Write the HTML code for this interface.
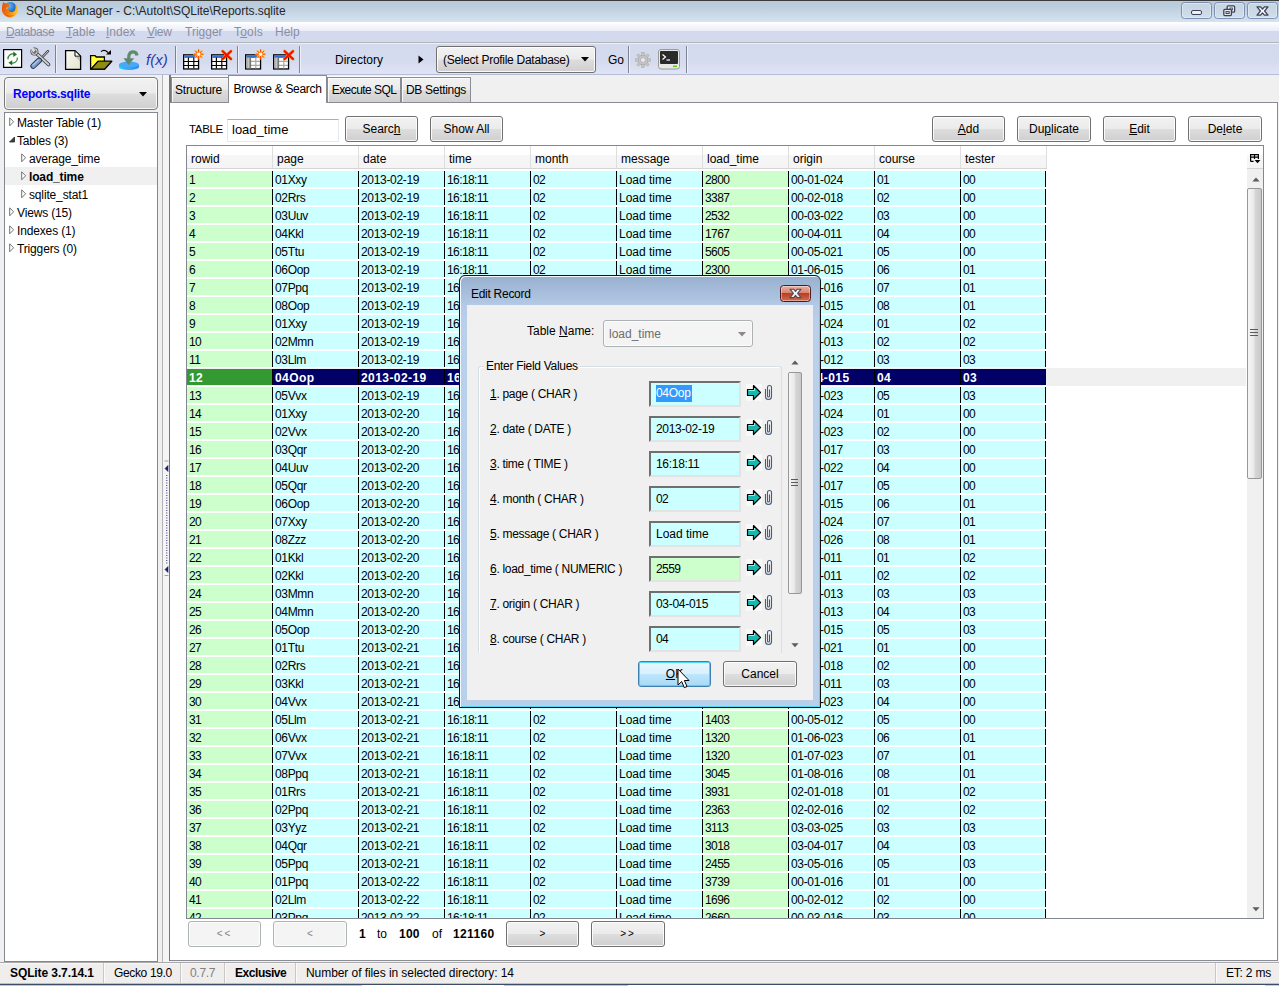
<!DOCTYPE html><html><head><meta charset="utf-8"><title>SQLite Manager</title><style>
*{box-sizing:border-box;margin:0;padding:0}
html,body{width:1279px;height:986px;overflow:hidden;background:#f0f0f0}
body{position:relative;font:12px "Liberation Sans",sans-serif;color:#000}
.a{position:absolute;white-space:pre}
.t{position:absolute;white-space:pre;line-height:14px;height:14px}
u{text-decoration:underline;text-underline-offset:1px}
.btn{position:absolute;border:1px solid #707070;border-radius:3px;background:linear-gradient(#f2f2f2 0,#ebebeb 48%,#dddddd 52%,#cfcfcf 100%);box-shadow:inset 0 0 0 1px rgba(255,255,255,.85);text-align:center;white-space:pre}
.btn.dis{border-color:#adb2b5;background:#f4f4f4;color:#838383}
.sep{position:absolute;width:1px;background:#7e8296;box-shadow:1px 0 0 #eef1fa}
.tab{position:absolute;border:1px solid #898c95;border-bottom:none;background:linear-gradient(#f2f2f2 0,#ebebeb 48%,#dddddd 52%,#cfcfcf 100%);box-shadow:inset 1px 1px 0 rgba(255,255,255,.8),0 -1px 0 #fbfbfb;text-align:center;white-space:pre}
.c{position:absolute;height:16px;line-height:18px;white-space:pre;overflow:hidden;padding-left:2px;letter-spacing:-.33px}
.cy{background:#ccffff;border-left:1px solid #000;padding-left:2px}
.gr{background:#ccffcc}
.g1{background:#ccffcc}
.sel .cy{background:#000066;color:#fff;font-weight:bold;border-left-color:#000;letter-spacing:.42px}
.sel .g1{background:#339933;color:#fff;font-weight:bold;letter-spacing:.3px}
.hd{position:absolute;top:146px;height:22px;line-height:27px;padding-left:4px;border-right:1px solid #dedede;background:linear-gradient(#fff 0,#fff 40%,#f6f6f6 41%,#f4f4f4 100%);white-space:pre}
.tb{position:absolute;height:26px;border:2px solid;border-color:#6f6f6f #e3e3e3 #e3e3e3 #6f6f6f;background:#ccffff;line-height:23px;padding-left:5px;white-space:pre;letter-spacing:-.3px}
.fl{position:absolute;left:490px;line-height:14px;white-space:pre}
.stsep{position:absolute;top:963px;width:1px;height:20px;background:#c9c6c6;box-shadow:1px 0 0 #fbfafa}
</style></head><body>
<div class="a" style="left:0;top:0;width:1279px;height:22px;background:linear-gradient(#b8cadb 0,#bccddd 30%,#d6e4f1 100%)"></div>
<div class="a" style="left:0;top:0;width:1279px;height:1px;background:#3a3a3a"></div>
<svg class="a" style="left:0px;top:0px" width="20" height="20" viewBox="0 0 20 20"><defs><radialGradient id="gl" cx=".4" cy=".3" r=".8"><stop offset="0" stop-color="#5cc0f8"/><stop offset=".5" stop-color="#2a78d0"/><stop offset="1" stop-color="#16307e"/></radialGradient><linearGradient id="fx" x1="0" y1="0" x2="1" y2=".3"><stop offset="0" stop-color="#e4500a"/><stop offset=".55" stop-color="#f07a10"/><stop offset="1" stop-color="#ffc020"/></linearGradient></defs><circle cx="10.4" cy="8.6" r="6.6" fill="url(#gl)"/><path d="M3.2 2 C4 3.2 5 3.6 6.4 3.2 C7 4.2 8 4.4 9.2 4 C8.6 5.2 9 6.2 10.2 6.6 C8.8 6.8 7.8 7.4 7.6 8.4 C8.8 8.8 9.4 9.8 8.8 10.8 C10.2 12.8 13.6 12.4 15 10 C16 8 15.6 5.6 14.6 3.6 C17.6 5.4 18.8 9 17.6 12.4 C16.2 16 12 18.2 8 17.2 C3.6 16 1.4 12 2 7.6 C2.2 5.6 2.6 3.6 3.2 2Z" fill="url(#fx)"/><path d="M5 13.5 C7 16 12 16.6 15 14 C12.6 17.4 7 17.8 5 13.5Z" fill="#c8400a" opacity=".55"/><path d="M5.6 8.2 L8 7.4 L7.4 8.6Z" fill="#fff3c0"/></svg>
<div class="t" style="left:26px;top:4px;color:#262626;letter-spacing:-.04px">SQLite Manager - C:\AutoIt\SQLite\Reports.sqlite</div>
<div class="a" style="left:1181px;top:2px;width:31px;height:17px;border:1px solid #7d90b2;border-radius:3.5px;background:linear-gradient(rgba(255,255,255,.22),rgba(255,255,255,.04));box-shadow:inset 0 0 0 1px rgba(255,255,255,.35)"></div>
<div class="a" style="left:1214px;top:2px;width:31px;height:17px;border:1px solid #7d90b2;border-radius:3.5px;background:linear-gradient(rgba(255,255,255,.22),rgba(255,255,255,.04));box-shadow:inset 0 0 0 1px rgba(255,255,255,.35)"></div>
<div class="a" style="left:1247px;top:2px;width:31px;height:17px;border:1px solid #7d90b2;border-radius:3.5px;background:linear-gradient(rgba(255,255,255,.22),rgba(255,255,255,.04));box-shadow:inset 0 0 0 1px rgba(255,255,255,.35)"></div>
<div class="a" style="left:1191px;top:10px;width:11px;height:5px;border:1.3px solid #3b4257;background:#eef0f2;border-radius:2px"></div>
<svg class="a" style="left:1223px;top:5px" width="13" height="12" viewBox="0 0 13 12"><rect x="4.2" y=".8" width="7.4" height="6.4" rx="1" fill="#eef0f2" stroke="#3b4257" stroke-width="1.3"/><rect x="7" y="3" width="2.4" height="2" fill="none" stroke="#3b4257" stroke-width=".9"/><rect x=".8" y="4.4" width="7.6" height="6.2" rx="1" fill="#eef0f2" stroke="#3b4257" stroke-width="1.3"/><rect x="3" y="6.6" width="3.2" height="2" fill="#dfe5ee" stroke="#3b4257" stroke-width="1"/></svg>
<svg class="a" style="left:1256px;top:6px" width="13" height="10" viewBox="0 0 13 10"><path d="M1 .8 L4.6 .8 L6.5 3 L8.4 .8 L12 .8 L8.6 5 L12 9.2 L8.4 9.2 L6.5 7 L4.6 9.2 L1 9.2 L4.4 5Z" fill="#f2f3f5" stroke="#3b4257" stroke-width="1.2" stroke-linejoin="round"/></svg>
<div class="a" style="left:0;top:22px;width:1279px;height:20px;background:linear-gradient(#ffffff 0,#e9ecf8 45%,#d4daed 46%,#d4daed 100%)"></div>
<div class="a" style="left:0;top:42px;width:1279px;height:1px;background:#b0b4b8"></div>
<div class="t" style="left:6px;top:25px;color:#8b8ea2;letter-spacing:-0.4px"><u>D</u>atabase</div>
<div class="t" style="left:66px;top:25px;color:#8b8ea2;letter-spacing:0.15px"><u>T</u>able</div>
<div class="t" style="left:106px;top:25px;color:#8b8ea2;letter-spacing:0px"><u>I</u>ndex</div>
<div class="t" style="left:147px;top:25px;color:#8b8ea2;letter-spacing:-0.3px"><u>V</u>iew</div>
<div class="t" style="left:185px;top:25px;color:#8b8ea2;letter-spacing:0px">Trigger</div>
<div class="t" style="left:234px;top:25px;color:#8b8ea2;letter-spacing:0.2px">T<u>o</u>ols</div>
<div class="t" style="left:275px;top:25px;color:#8b8ea2;letter-spacing:0px">Help</div>
<div class="a" style="left:0;top:43px;width:1279px;height:31px;background:linear-gradient(#eef1fa 0,#eef1fa 1px,#d4daed 1px,#d5dbee 60%,#dfe4f5 100%)"></div>
<div class="a" style="left:0;top:74px;width:1279px;height:1px;background:#b5bcd6"></div>
<div class="sep" style="left:55px;top:45px;height:28px"></div>
<div class="sep" style="left:175px;top:46px;height:27px"></div>
<div class="sep" style="left:237px;top:46px;height:27px"></div>
<div class="sep" style="left:299px;top:46px;height:27px"></div>
<div class="sep" style="left:628px;top:46px;height:27px"></div>
<div class="sep" style="left:686px;top:46px;height:27px"></div>
<svg class="a" style="left:3px;top:49px" width="20" height="19" viewBox="0 0 20 19"><rect x=".6" y=".6" width="18" height="17.8" fill="#fbfdfa" stroke="#000" stroke-width="1.2"/><path d="M5 10.2 A4.7 4.7 0 0 1 11.2 5.2" fill="none" stroke="#2f7a35" stroke-width="1.15"/><path d="M10.3 2.6 L14 5.4 L10.3 8Z" fill="#236b2a"/><path d="M14.3 8.6 A4.7 4.7 0 0 1 8.2 13.8" fill="none" stroke="#2f7a35" stroke-width="1.15"/><path d="M9.2 11.2 L5.4 13.8 L9.2 16.6Z" fill="#236b2a"/></svg>
<svg class="a" style="left:29px;top:47px" width="22" height="22" viewBox="0 0 22 22"><path d="M19 4.2 L11.5 12" stroke="#3a3a3a" stroke-width="2.4" stroke-linecap="round"/><path d="M19 4.2 L11.5 12" stroke="#e2e2e2" stroke-width="1" stroke-linecap="round"/><path d="M6.5 5.5 L19.5 17.5" stroke="#3c3c3c" stroke-width="3.6" stroke-linecap="round"/><path d="M6.5 5.5 L19.5 17.5" stroke="#cfcfcf" stroke-width="1.9" stroke-linecap="round"/><circle cx="5.4" cy="4.6" r="2.7" fill="none" stroke="#444" stroke-width="2.6"/><circle cx="5.4" cy="4.6" r="2.7" fill="none" stroke="#cdcdcd" stroke-width="1.2"/><path d="M5.4 4.6 L2.6 0.6" stroke="#d5dbee" stroke-width="2.6"/><path d="M10.2 13.4 L4.2 19" stroke="#27354d" stroke-width="5.6" stroke-linecap="round"/><path d="M10.2 13.4 L4.2 19" stroke="#7c9fc9" stroke-width="3.8" stroke-linecap="round"/><path d="M9.4 13.2 L4 18.2" stroke="#b9cfe8" stroke-width="1.1" stroke-linecap="round"/></svg>
<svg class="a" style="left:64px;top:49px" width="19" height="22" viewBox="0 0 19 22"><defs><linearGradient id="dg" x1="0" y1="0" x2="1" y2="1"><stop offset="0" stop-color="#fafaf0"/><stop offset="1" stop-color="#e4e4d0"/></linearGradient></defs><path d="M1.6 1.6 L11 1.6 L16.6 7.2 L16.6 20.4 L1.6 20.4Z" fill="url(#dg)" stroke="#000" stroke-width="1.3"/><path d="M11 1.6 L11 7.2 L16.6 7.2Z" fill="#fff" stroke="#000" stroke-width="1"/><path d="M11.6 7.8 L16 7.8 L16 12.5Z" fill="#bdbdb0"/></svg>
<svg class="a" style="left:89px;top:48px" width="25" height="23" viewBox="0 0 25 23"><defs><pattern id="dy" width="2" height="2" patternUnits="userSpaceOnUse"><rect width="2" height="2" fill="#ffff30"/><rect width="1" height="1" fill="#fff"/><rect x="1" y="1" width="1" height="1" fill="#fff"/></pattern></defs><path d="M1.6 7.6 L6 7.6 L7.2 9 L15.4 9 L15.4 21.2 L1.6 21.2Z" fill="url(#dy)" stroke="#000" stroke-width="1.3"/><path d="M1.8 21.2 L9 13.2 L22.8 13.2 L15.6 21.2Z" fill="#8f8a10" stroke="#000" stroke-width="1.3" stroke-linejoin="round"/><path d="M12 3.6 C14 1.6 16.5 2 19 4.5" fill="none" stroke="#000" stroke-width="1.2"/><path d="M22 2 L22 6.6 L17 6.6Z" fill="#000"/></svg>
<svg class="a" style="left:118px;top:49px" width="23" height="23" viewBox="0 0 23 23"><defs><linearGradient id="ug" x1="0" y1="0" x2="1" y2="0"><stop offset="0" stop-color="#10d0ff"/><stop offset=".5" stop-color="#3aa2f6"/><stop offset="1" stop-color="#2a8af0"/></linearGradient></defs><path d="M1 15.5 L1 18 A10 3 0 0 0 21 18 L21 15.5Z" fill="url(#ug)"/><ellipse cx="11" cy="15.5" rx="10" ry="3" fill="#48a8f8"/><path d="M19 6.5 C18.5 2 12.5 1.5 11 6 L10.6 10" fill="none" stroke="#5f8a6e" stroke-width="3.2"/><path d="M5.4 9.2 L16.2 9.2 L10.6 16Z" fill="#5f8a6e"/></svg>
<div class="a" style="left:146px;top:51px;font:italic 15px 'Liberation Sans',sans-serif;color:#2a3ab4;line-height:18px">f(x)</div>
<svg class="a" style="left:183px;top:49px" width="24" height="22" viewBox="0 0 24 22"><rect x=".65" y="5.85" width="14.9" height="14.1" fill="#fff" stroke="#000" stroke-width="1.3"/><rect x="1.3" y="6.4" width="13.6" height="2.5" fill="#3a6fc8"/><path d="M5.4 8.5 V19.5 M10.8 8.5 V19.5 M1 12.5 H15 M1 16.5 H15" stroke="#000" stroke-width="1.15" fill="none"/><g stroke="#ffd800" stroke-width="2.2" stroke-linecap="round"><path d="M15.6 1 V9.4 M11.4 5.2 H19.8 M12.6 2.2 L18.6 8.2 M18.6 2.2 L12.6 8.2"/></g><g stroke="#ff3c00" stroke-width="1" stroke-linecap="round"><path d="M15.6 .8 V9.6 M11.2 5.2 H20 M12.5 2.1 L18.7 8.3 M18.7 2.1 L12.5 8.3"/></g><circle cx="15.6" cy="5.2" r="1.7" fill="#fffbe0"/></svg>
<svg class="a" style="left:211px;top:49px" width="24" height="22" viewBox="0 0 24 22"><rect x=".65" y="5.85" width="14.9" height="14.1" fill="#fff" stroke="#000" stroke-width="1.3"/><rect x="1.3" y="6.4" width="13.6" height="2.5" fill="#3a6fc8"/><path d="M5.4 8.5 V19.5 M10.8 8.5 V19.5 M1 12.5 H15 M1 16.5 H15" stroke="#000" stroke-width="1.15" fill="none"/><path d="M11.6 2.2 L20 10 M20 2.2 L11.6 10" stroke="#ff8a00" stroke-width="3" stroke-linecap="round"/><path d="M11.6 2.2 L20 10 M20 2.2 L11.6 10" stroke="#f01000" stroke-width="1.9" stroke-linecap="round"/></svg>
<svg class="a" style="left:245px;top:49px" width="24" height="22" viewBox="0 0 24 22"><rect x=".65" y="5.85" width="14.9" height="14.1" fill="#fff" stroke="#000" stroke-width="1.3"/><rect x="1.3" y="6.4" width="13.6" height="2.5" fill="#3a6fc8"/><rect x="1.3" y="8.5" width="3.9" height="10.8" fill="#9c9c98"/><rect x="2.4" y="9" width="1.6" height="10" fill="#c4c4c0"/><path d="M10.8 8.5 V19.5 M5.2 12.3 H15 M5.2 16.3 H15" stroke="#a8a8a8" stroke-width="1.2" fill="none"/><path d="M5.6 8.5 V19.5" stroke="#6a6a6a" stroke-width="1"/><g stroke="#ffd800" stroke-width="2.2" stroke-linecap="round"><path d="M15.6 1 V9.4 M11.4 5.2 H19.8 M12.6 2.2 L18.6 8.2 M18.6 2.2 L12.6 8.2"/></g><g stroke="#ff3c00" stroke-width="1" stroke-linecap="round"><path d="M15.6 .8 V9.6 M11.2 5.2 H20 M12.5 2.1 L18.7 8.3 M18.7 2.1 L12.5 8.3"/></g><circle cx="15.6" cy="5.2" r="1.7" fill="#fffbe0"/></svg>
<svg class="a" style="left:273px;top:49px" width="24" height="22" viewBox="0 0 24 22"><rect x=".65" y="5.85" width="14.9" height="14.1" fill="#fff" stroke="#000" stroke-width="1.3"/><rect x="1.3" y="6.4" width="13.6" height="2.5" fill="#3a6fc8"/><rect x="1.3" y="8.5" width="3.9" height="10.8" fill="#9c9c98"/><rect x="2.4" y="9" width="1.6" height="10" fill="#c4c4c0"/><path d="M10.8 8.5 V19.5 M5.2 12.3 H15 M5.2 16.3 H15" stroke="#a8a8a8" stroke-width="1.2" fill="none"/><path d="M5.6 8.5 V19.5" stroke="#6a6a6a" stroke-width="1"/><path d="M11.6 2.2 L20 10 M20 2.2 L11.6 10" stroke="#ff8a00" stroke-width="3" stroke-linecap="round"/><path d="M11.6 2.2 L20 10 M20 2.2 L11.6 10" stroke="#f01000" stroke-width="1.9" stroke-linecap="round"/></svg>
<div class="t" style="left:335px;top:53px">Directory</div>
<svg class="a" style="left:418px;top:55px" width="6" height="9"><path d="M0.5 0.5 L5.5 4.5 L0.5 8.5Z" fill="#000"/></svg>
<div class="btn" style="left:436px;top:46px;width:160px;height:27px;text-align:left;padding-left:6px;line-height:27px;letter-spacing:-.28px">(Select Profile Database)</div>
<svg class="a" style="left:581px;top:57px" width="8" height="5"><path d="M0 0 L8 0 L4 4.5Z" fill="#000"/></svg>
<div class="t" style="left:608px;top:53px">Go</div>
<svg class="a" style="left:635px;top:52px" width="16" height="16" viewBox="0 0 16 16"><g fill="#c4c4c4" stroke="#a9a9a9" stroke-width=".5"><circle cx="8" cy="8" r="5.2"/><g><rect x="6.7" y="0.3" width="2.6" height="3"/><rect x="6.7" y="12.7" width="2.6" height="3"/><rect x="0.3" y="6.7" width="3" height="2.6"/><rect x="12.7" y="6.7" width="3" height="2.6"/><rect x="6.7" y="0.3" width="2.6" height="3" transform="rotate(45 8 8)"/><rect x="6.7" y="12.7" width="2.6" height="3" transform="rotate(45 8 8)"/><rect x="0.3" y="6.7" width="3" height="2.6" transform="rotate(45 8 8)"/><rect x="12.7" y="6.7" width="3" height="2.6" transform="rotate(45 8 8)"/></g></g><circle cx="8" cy="8" r="2.4" fill="#e8eaf3" stroke="#a6a6a6" stroke-width=".6"/></svg>
<svg class="a" style="left:658px;top:49px" width="22" height="21" viewBox="0 0 22 21"><rect x=".5" y=".5" width="21" height="19.5" rx="2.5" fill="#e8e8e4" stroke="#9a9a9a"/><rect x="2" y="2" width="18" height="13" rx="1" fill="#2a2a2a"/><path d="M4.5 5.5 L7.5 8 L4.5 10.5" fill="none" stroke="#fff" stroke-width="1.2"/><path d="M8.5 11 H12" stroke="#fff" stroke-width="1.2"/><rect x="15" y="16.5" width="4" height="1.6" fill="#50d020"/></svg>
<div class="btn" style="left:4px;top:77px;width:154px;height:33px;border-color:#7a7a7a;border-radius:4px"></div>
<div class="t" style="left:13px;top:87px;font-weight:bold;color:#0000ff;letter-spacing:-.2px">Reports.sqlite</div>
<svg class="a" style="left:139px;top:92px" width="8" height="5"><path d="M0 0 L8 0 L4 4.5Z" fill="#000"/></svg>
<div class="a" style="left:4px;top:112px;width:154px;height:850px;background:#fff;border:1px solid #828790"></div>
<div class="a" style="left:5px;top:167px;width:152px;height:18px;background:#f0f0f0"></div>
<svg class="a" style="left:9px;top:117px" width="6" height="10"><path d="M0.7 0.8 L4.6 4.8 L0.7 8.8Z" fill="#fff" stroke="#737373" stroke-width="1"/></svg>
<div class="t" style="left:17px;top:116px;letter-spacing:-.15px">Master Table (1)</div>
<svg class="a" style="left:9px;top:136px" width="7" height="7"><path d="M5.5 1 L5.5 6 L0.5 6Z" fill="#404040" stroke="#262626" stroke-width=".8"/></svg>
<div class="t" style="left:17px;top:134px;letter-spacing:-.15px">Tables (3)</div>
<svg class="a" style="left:21px;top:153px" width="6" height="10"><path d="M0.7 0.8 L4.6 4.8 L0.7 8.8Z" fill="#fff" stroke="#737373" stroke-width="1"/></svg>
<div class="t" style="left:29px;top:152px;letter-spacing:-.15px">average_time</div>
<svg class="a" style="left:21px;top:171px" width="6" height="10"><path d="M0.7 0.8 L4.6 4.8 L0.7 8.8Z" fill="#fff" stroke="#737373" stroke-width="1"/></svg>
<div class="t" style="left:29px;top:170px;font-weight:bold;letter-spacing:-.15px">load_time</div>
<svg class="a" style="left:21px;top:189px" width="6" height="10"><path d="M0.7 0.8 L4.6 4.8 L0.7 8.8Z" fill="#fff" stroke="#737373" stroke-width="1"/></svg>
<div class="t" style="left:29px;top:188px;letter-spacing:-.15px">sqlite_stat1</div>
<svg class="a" style="left:9px;top:207px" width="6" height="10"><path d="M0.7 0.8 L4.6 4.8 L0.7 8.8Z" fill="#fff" stroke="#737373" stroke-width="1"/></svg>
<div class="t" style="left:17px;top:206px;letter-spacing:-.15px">Views (15)</div>
<svg class="a" style="left:9px;top:225px" width="6" height="10"><path d="M0.7 0.8 L4.6 4.8 L0.7 8.8Z" fill="#fff" stroke="#737373" stroke-width="1"/></svg>
<div class="t" style="left:17px;top:224px;letter-spacing:-.15px">Indexes (1)</div>
<svg class="a" style="left:9px;top:243px" width="6" height="10"><path d="M0.7 0.8 L4.6 4.8 L0.7 8.8Z" fill="#fff" stroke="#737373" stroke-width="1"/></svg>
<div class="t" style="left:17px;top:242px;letter-spacing:-.15px">Triggers (0)</div>
<div class="a" style="left:162px;top:75px;width:1px;height:887px;background:#b4b4b4"></div>
<div class="a" style="left:163px;top:75px;width:6px;height:887px;background:#f5f5f5"></div>
<svg class="a" style="left:164px;top:460px" width="5" height="117" viewBox="0 0 5 117"><path d="M.5 1 H4.5 M.5 115.5 H4.5" stroke="#a0a0a0" stroke-width="1"/><path d="M4 5.5 L1 8.5 L4 11.5Z M4 106.5 L1 109.5 L4 112.5Z" fill="#1c1c70" stroke="#1c1c70" stroke-width=".6"/><path d="M2.8 15 V104" stroke="#2a2a80" stroke-width="1" stroke-dasharray="1 1.5"/></svg>
<div class="a" style="left:169px;top:75px;width:2px;height:886px;background:#767676"></div>
<div class="a" style="left:170px;top:102px;width:1108px;height:859px;background:#fff;border:1px solid #898c95;border-left:none"></div>
<div class="tab" style="left:171px;top:77px;width:58px;height:25px;line-height:25px;letter-spacing:-.2px;padding-right:3px">Structure</div>
<div class="tab" style="left:327px;top:77px;width:74px;height:25px;line-height:25px;letter-spacing:-.55px">Execute SQL</div>
<div class="tab" style="left:401px;top:77px;width:70px;height:25px;line-height:25px;letter-spacing:-.3px">DB Settings</div>
<div class="tab" style="left:228px;top:75px;width:99px;height:28px;line-height:26px;background:#fff;letter-spacing:-.3px;box-shadow:none">Browse &amp; Search</div>
<div class="t" style="left:189px;top:122px;font-size:11.5px;letter-spacing:-.35px">TABLE</div>
<div class="a" style="left:227px;top:119px;width:112px;height:23px;border:1px solid #e3e9ef;border-top-color:#abadb3;background:#fff;border-radius:1px"></div>
<div class="t" style="left:232px;top:123px;font-size:13px">load_time</div>
<div class="btn" style="left:345px;top:116px;width:73px;height:26px;line-height:24px">Searc<u>h</u></div>
<div class="btn" style="left:430px;top:116px;width:73px;height:26px;line-height:24px">Show All</div>
<div class="btn" style="left:932px;top:116px;width:73px;height:26px;line-height:24px"><u>A</u>dd</div>
<div class="btn" style="left:1017px;top:116px;width:74px;height:26px;line-height:24px">Du<u>p</u>licate</div>
<div class="btn" style="left:1103px;top:116px;width:73px;height:26px;line-height:24px"><u>E</u>dit</div>
<div class="btn" style="left:1188px;top:116px;width:74px;height:26px;line-height:24px">De<u>l</u>ete</div>
<div class="a" style="left:186px;top:145px;width:1078px;height:774px;background:#fff;border:1px solid #828790;overflow:hidden" id="grid">
</div>
<div class="hd" style="left:187px;width:86px">rowid</div>
<div class="hd" style="left:273px;width:86px">page</div>
<div class="hd" style="left:359px;width:86px">date</div>
<div class="hd" style="left:445px;width:86px">time</div>
<div class="hd" style="left:531px;width:86px">month</div>
<div class="hd" style="left:617px;width:86px">message</div>
<div class="hd" style="left:703px;width:86px">load_time</div>
<div class="hd" style="left:789px;width:86px">origin</div>
<div class="hd" style="left:875px;width:86px">course</div>
<div class="hd" style="left:961px;width:86px">tester</div>
<div class="a" style="left:187px;top:168px;width:860px;height:1px;background:#d5d5d5"></div>
<div class="hd" style="left:1247px;width:16px;border-right:none;padding:0"></div>
<div class="a" style="left:1247px;top:168px;width:16px;height:1px;background:#d5d5d5"></div>
<svg class="a" style="left:1250px;top:154px" width="11" height="10" viewBox="0 0 11 10"><path d="M.6 7.4 V.6 H8.4 V5 M.6 3.2 H8.4 M4.5 .6 V5 M.6 7.4 H3.6" fill="none" stroke="#000" stroke-width="1.2"/><path d="M4.6 6 L10.4 6 L7.5 9.2Z" fill="#000"/></svg>
<div class="">
<div class="c g1" style="left:187px;top:171px;width:85px;height:16px;letter-spacing:-.6px">1</div>
<div class="c cy" style="left:272px;top:171px;width:86px;height:16px;">01Xxy</div>
<div class="c cy" style="left:358px;top:171px;width:86px;height:16px;">2013-02-19</div>
<div class="c cy" style="left:444px;top:171px;width:86px;height:16px;letter-spacing:-.6px;">16:18:11</div>
<div class="c cy" style="left:530px;top:171px;width:86px;height:16px;letter-spacing:-.6px;">02</div>
<div class="c cy" style="left:616px;top:171px;width:86px;height:16px;letter-spacing:0;">Load time</div>
<div class="c cy gr" style="left:702px;top:171px;width:86px;height:16px;letter-spacing:-.6px;">2800</div>
<div class="c cy" style="left:788px;top:171px;width:86px;height:16px;">00-01-024</div>
<div class="c cy" style="left:874px;top:171px;width:86px;height:16px;letter-spacing:-.6px;">01</div>
<div class="c cy" style="left:960px;top:171px;width:86px;height:16px;letter-spacing:-.6px;">00</div>
<div class="a" style="left:1045px;top:171px;width:1px;height:16px;background:#000"></div>
</div>
<div class="">
<div class="c g1" style="left:187px;top:189px;width:85px;height:16px;letter-spacing:-.6px">2</div>
<div class="c cy" style="left:272px;top:189px;width:86px;height:16px;">02Rrs</div>
<div class="c cy" style="left:358px;top:189px;width:86px;height:16px;">2013-02-19</div>
<div class="c cy" style="left:444px;top:189px;width:86px;height:16px;letter-spacing:-.6px;">16:18:11</div>
<div class="c cy" style="left:530px;top:189px;width:86px;height:16px;letter-spacing:-.6px;">02</div>
<div class="c cy" style="left:616px;top:189px;width:86px;height:16px;letter-spacing:0;">Load time</div>
<div class="c cy gr" style="left:702px;top:189px;width:86px;height:16px;letter-spacing:-.6px;">3387</div>
<div class="c cy" style="left:788px;top:189px;width:86px;height:16px;">00-02-018</div>
<div class="c cy" style="left:874px;top:189px;width:86px;height:16px;letter-spacing:-.6px;">02</div>
<div class="c cy" style="left:960px;top:189px;width:86px;height:16px;letter-spacing:-.6px;">00</div>
<div class="a" style="left:1045px;top:189px;width:1px;height:16px;background:#000"></div>
</div>
<div class="">
<div class="c g1" style="left:187px;top:207px;width:85px;height:16px;letter-spacing:-.6px">3</div>
<div class="c cy" style="left:272px;top:207px;width:86px;height:16px;">03Uuv</div>
<div class="c cy" style="left:358px;top:207px;width:86px;height:16px;">2013-02-19</div>
<div class="c cy" style="left:444px;top:207px;width:86px;height:16px;letter-spacing:-.6px;">16:18:11</div>
<div class="c cy" style="left:530px;top:207px;width:86px;height:16px;letter-spacing:-.6px;">02</div>
<div class="c cy" style="left:616px;top:207px;width:86px;height:16px;letter-spacing:0;">Load time</div>
<div class="c cy gr" style="left:702px;top:207px;width:86px;height:16px;letter-spacing:-.6px;">2532</div>
<div class="c cy" style="left:788px;top:207px;width:86px;height:16px;">00-03-022</div>
<div class="c cy" style="left:874px;top:207px;width:86px;height:16px;letter-spacing:-.6px;">03</div>
<div class="c cy" style="left:960px;top:207px;width:86px;height:16px;letter-spacing:-.6px;">00</div>
<div class="a" style="left:1045px;top:207px;width:1px;height:16px;background:#000"></div>
</div>
<div class="">
<div class="c g1" style="left:187px;top:225px;width:85px;height:16px;letter-spacing:-.6px">4</div>
<div class="c cy" style="left:272px;top:225px;width:86px;height:16px;">04Kkl</div>
<div class="c cy" style="left:358px;top:225px;width:86px;height:16px;">2013-02-19</div>
<div class="c cy" style="left:444px;top:225px;width:86px;height:16px;letter-spacing:-.6px;">16:18:11</div>
<div class="c cy" style="left:530px;top:225px;width:86px;height:16px;letter-spacing:-.6px;">02</div>
<div class="c cy" style="left:616px;top:225px;width:86px;height:16px;letter-spacing:0;">Load time</div>
<div class="c cy gr" style="left:702px;top:225px;width:86px;height:16px;letter-spacing:-.6px;">1767</div>
<div class="c cy" style="left:788px;top:225px;width:86px;height:16px;">00-04-011</div>
<div class="c cy" style="left:874px;top:225px;width:86px;height:16px;letter-spacing:-.6px;">04</div>
<div class="c cy" style="left:960px;top:225px;width:86px;height:16px;letter-spacing:-.6px;">00</div>
<div class="a" style="left:1045px;top:225px;width:1px;height:16px;background:#000"></div>
</div>
<div class="">
<div class="c g1" style="left:187px;top:243px;width:85px;height:16px;letter-spacing:-.6px">5</div>
<div class="c cy" style="left:272px;top:243px;width:86px;height:16px;">05Ttu</div>
<div class="c cy" style="left:358px;top:243px;width:86px;height:16px;">2013-02-19</div>
<div class="c cy" style="left:444px;top:243px;width:86px;height:16px;letter-spacing:-.6px;">16:18:11</div>
<div class="c cy" style="left:530px;top:243px;width:86px;height:16px;letter-spacing:-.6px;">02</div>
<div class="c cy" style="left:616px;top:243px;width:86px;height:16px;letter-spacing:0;">Load time</div>
<div class="c cy gr" style="left:702px;top:243px;width:86px;height:16px;letter-spacing:-.6px;">5605</div>
<div class="c cy" style="left:788px;top:243px;width:86px;height:16px;">00-05-021</div>
<div class="c cy" style="left:874px;top:243px;width:86px;height:16px;letter-spacing:-.6px;">05</div>
<div class="c cy" style="left:960px;top:243px;width:86px;height:16px;letter-spacing:-.6px;">00</div>
<div class="a" style="left:1045px;top:243px;width:1px;height:16px;background:#000"></div>
</div>
<div class="">
<div class="c g1" style="left:187px;top:261px;width:85px;height:16px;letter-spacing:-.6px">6</div>
<div class="c cy" style="left:272px;top:261px;width:86px;height:16px;">06Oop</div>
<div class="c cy" style="left:358px;top:261px;width:86px;height:16px;">2013-02-19</div>
<div class="c cy" style="left:444px;top:261px;width:86px;height:16px;letter-spacing:-.6px;">16:18:11</div>
<div class="c cy" style="left:530px;top:261px;width:86px;height:16px;letter-spacing:-.6px;">02</div>
<div class="c cy" style="left:616px;top:261px;width:86px;height:16px;letter-spacing:0;">Load time</div>
<div class="c cy gr" style="left:702px;top:261px;width:86px;height:16px;letter-spacing:-.6px;">2300</div>
<div class="c cy" style="left:788px;top:261px;width:86px;height:16px;">01-06-015</div>
<div class="c cy" style="left:874px;top:261px;width:86px;height:16px;letter-spacing:-.6px;">06</div>
<div class="c cy" style="left:960px;top:261px;width:86px;height:16px;letter-spacing:-.6px;">01</div>
<div class="a" style="left:1045px;top:261px;width:1px;height:16px;background:#000"></div>
</div>
<div class="">
<div class="c g1" style="left:187px;top:279px;width:85px;height:16px;letter-spacing:-.6px">7</div>
<div class="c cy" style="left:272px;top:279px;width:86px;height:16px;">07Ppq</div>
<div class="c cy" style="left:358px;top:279px;width:86px;height:16px;">2013-02-19</div>
<div class="c cy" style="left:444px;top:279px;width:86px;height:16px;letter-spacing:-.6px;">16:18:11</div>
<div class="c cy" style="left:530px;top:279px;width:86px;height:16px;letter-spacing:-.6px;">02</div>
<div class="c cy" style="left:616px;top:279px;width:86px;height:16px;letter-spacing:0;">Load time</div>
<div class="c cy gr" style="left:702px;top:279px;width:86px;height:16px;letter-spacing:-.6px;">2411</div>
<div class="c cy" style="left:788px;top:279px;width:86px;height:16px;">01-07-016</div>
<div class="c cy" style="left:874px;top:279px;width:86px;height:16px;letter-spacing:-.6px;">07</div>
<div class="c cy" style="left:960px;top:279px;width:86px;height:16px;letter-spacing:-.6px;">01</div>
<div class="a" style="left:1045px;top:279px;width:1px;height:16px;background:#000"></div>
</div>
<div class="">
<div class="c g1" style="left:187px;top:297px;width:85px;height:16px;letter-spacing:-.6px">8</div>
<div class="c cy" style="left:272px;top:297px;width:86px;height:16px;">08Oop</div>
<div class="c cy" style="left:358px;top:297px;width:86px;height:16px;">2013-02-19</div>
<div class="c cy" style="left:444px;top:297px;width:86px;height:16px;letter-spacing:-.6px;">16:18:11</div>
<div class="c cy" style="left:530px;top:297px;width:86px;height:16px;letter-spacing:-.6px;">02</div>
<div class="c cy" style="left:616px;top:297px;width:86px;height:16px;letter-spacing:0;">Load time</div>
<div class="c cy gr" style="left:702px;top:297px;width:86px;height:16px;letter-spacing:-.6px;">3120</div>
<div class="c cy" style="left:788px;top:297px;width:86px;height:16px;">01-08-015</div>
<div class="c cy" style="left:874px;top:297px;width:86px;height:16px;letter-spacing:-.6px;">08</div>
<div class="c cy" style="left:960px;top:297px;width:86px;height:16px;letter-spacing:-.6px;">01</div>
<div class="a" style="left:1045px;top:297px;width:1px;height:16px;background:#000"></div>
</div>
<div class="">
<div class="c g1" style="left:187px;top:315px;width:85px;height:16px;letter-spacing:-.6px">9</div>
<div class="c cy" style="left:272px;top:315px;width:86px;height:16px;">01Xxy</div>
<div class="c cy" style="left:358px;top:315px;width:86px;height:16px;">2013-02-19</div>
<div class="c cy" style="left:444px;top:315px;width:86px;height:16px;letter-spacing:-.6px;">16:18:11</div>
<div class="c cy" style="left:530px;top:315px;width:86px;height:16px;letter-spacing:-.6px;">02</div>
<div class="c cy" style="left:616px;top:315px;width:86px;height:16px;letter-spacing:0;">Load time</div>
<div class="c cy gr" style="left:702px;top:315px;width:86px;height:16px;letter-spacing:-.6px;">2788</div>
<div class="c cy" style="left:788px;top:315px;width:86px;height:16px;">02-01-024</div>
<div class="c cy" style="left:874px;top:315px;width:86px;height:16px;letter-spacing:-.6px;">01</div>
<div class="c cy" style="left:960px;top:315px;width:86px;height:16px;letter-spacing:-.6px;">02</div>
<div class="a" style="left:1045px;top:315px;width:1px;height:16px;background:#000"></div>
</div>
<div class="">
<div class="c g1" style="left:187px;top:333px;width:85px;height:16px;letter-spacing:-.6px">10</div>
<div class="c cy" style="left:272px;top:333px;width:86px;height:16px;">02Mmn</div>
<div class="c cy" style="left:358px;top:333px;width:86px;height:16px;">2013-02-19</div>
<div class="c cy" style="left:444px;top:333px;width:86px;height:16px;letter-spacing:-.6px;">16:18:11</div>
<div class="c cy" style="left:530px;top:333px;width:86px;height:16px;letter-spacing:-.6px;">02</div>
<div class="c cy" style="left:616px;top:333px;width:86px;height:16px;letter-spacing:0;">Load time</div>
<div class="c cy gr" style="left:702px;top:333px;width:86px;height:16px;letter-spacing:-.6px;">1934</div>
<div class="c cy" style="left:788px;top:333px;width:86px;height:16px;">02-02-013</div>
<div class="c cy" style="left:874px;top:333px;width:86px;height:16px;letter-spacing:-.6px;">02</div>
<div class="c cy" style="left:960px;top:333px;width:86px;height:16px;letter-spacing:-.6px;">02</div>
<div class="a" style="left:1045px;top:333px;width:1px;height:16px;background:#000"></div>
</div>
<div class="">
<div class="c g1" style="left:187px;top:351px;width:85px;height:16px;letter-spacing:-.6px">11</div>
<div class="c cy" style="left:272px;top:351px;width:86px;height:16px;">03Llm</div>
<div class="c cy" style="left:358px;top:351px;width:86px;height:16px;">2013-02-19</div>
<div class="c cy" style="left:444px;top:351px;width:86px;height:16px;letter-spacing:-.6px;">16:18:11</div>
<div class="c cy" style="left:530px;top:351px;width:86px;height:16px;letter-spacing:-.6px;">02</div>
<div class="c cy" style="left:616px;top:351px;width:86px;height:16px;letter-spacing:0;">Load time</div>
<div class="c cy gr" style="left:702px;top:351px;width:86px;height:16px;letter-spacing:-.6px;">2245</div>
<div class="c cy" style="left:788px;top:351px;width:86px;height:16px;">03-03-012</div>
<div class="c cy" style="left:874px;top:351px;width:86px;height:16px;letter-spacing:-.6px;">03</div>
<div class="c cy" style="left:960px;top:351px;width:86px;height:16px;letter-spacing:-.6px;">03</div>
<div class="a" style="left:1045px;top:351px;width:1px;height:16px;background:#000"></div>
</div>
<div class="sel">
<div class="a" style="left:187px;top:368px;width:1059px;height:18px;background:#f0f0f0"></div>
<div class="c g1" style="left:187px;top:369px;width:85px;height:16px;">12</div>
<div class="c cy" style="left:272px;top:369px;width:86px;height:16px;">04Oop</div>
<div class="c cy" style="left:358px;top:369px;width:86px;height:16px;">2013-02-19</div>
<div class="c cy" style="left:444px;top:369px;width:86px;height:16px;">16:18:11</div>
<div class="c cy" style="left:530px;top:369px;width:86px;height:16px;">02</div>
<div class="c cy" style="left:616px;top:369px;width:86px;height:16px;letter-spacing:0;">Load time</div>
<div class="c cy" style="left:702px;top:369px;width:86px;height:16px;">2559</div>
<div class="c cy" style="left:788px;top:369px;width:86px;height:16px;">03-04-015</div>
<div class="c cy" style="left:874px;top:369px;width:86px;height:16px;">04</div>
<div class="c cy" style="left:960px;top:369px;width:86px;height:16px;">03</div>
<div class="a" style="left:1045px;top:369px;width:1px;height:16px;background:#000"></div>
</div>
<div class="">
<div class="c g1" style="left:187px;top:387px;width:85px;height:16px;letter-spacing:-.6px">13</div>
<div class="c cy" style="left:272px;top:387px;width:86px;height:16px;">05Vvx</div>
<div class="c cy" style="left:358px;top:387px;width:86px;height:16px;">2013-02-19</div>
<div class="c cy" style="left:444px;top:387px;width:86px;height:16px;letter-spacing:-.6px;">16:18:11</div>
<div class="c cy" style="left:530px;top:387px;width:86px;height:16px;letter-spacing:-.6px;">02</div>
<div class="c cy" style="left:616px;top:387px;width:86px;height:16px;letter-spacing:0;">Load time</div>
<div class="c cy gr" style="left:702px;top:387px;width:86px;height:16px;letter-spacing:-.6px;">3302</div>
<div class="c cy" style="left:788px;top:387px;width:86px;height:16px;">03-05-023</div>
<div class="c cy" style="left:874px;top:387px;width:86px;height:16px;letter-spacing:-.6px;">05</div>
<div class="c cy" style="left:960px;top:387px;width:86px;height:16px;letter-spacing:-.6px;">03</div>
<div class="a" style="left:1045px;top:387px;width:1px;height:16px;background:#000"></div>
</div>
<div class="">
<div class="c g1" style="left:187px;top:405px;width:85px;height:16px;letter-spacing:-.6px">14</div>
<div class="c cy" style="left:272px;top:405px;width:86px;height:16px;">01Xxy</div>
<div class="c cy" style="left:358px;top:405px;width:86px;height:16px;">2013-02-20</div>
<div class="c cy" style="left:444px;top:405px;width:86px;height:16px;letter-spacing:-.6px;">16:18:11</div>
<div class="c cy" style="left:530px;top:405px;width:86px;height:16px;letter-spacing:-.6px;">02</div>
<div class="c cy" style="left:616px;top:405px;width:86px;height:16px;letter-spacing:0;">Load time</div>
<div class="c cy gr" style="left:702px;top:405px;width:86px;height:16px;letter-spacing:-.6px;">2711</div>
<div class="c cy" style="left:788px;top:405px;width:86px;height:16px;">00-01-024</div>
<div class="c cy" style="left:874px;top:405px;width:86px;height:16px;letter-spacing:-.6px;">01</div>
<div class="c cy" style="left:960px;top:405px;width:86px;height:16px;letter-spacing:-.6px;">00</div>
<div class="a" style="left:1045px;top:405px;width:1px;height:16px;background:#000"></div>
</div>
<div class="">
<div class="c g1" style="left:187px;top:423px;width:85px;height:16px;letter-spacing:-.6px">15</div>
<div class="c cy" style="left:272px;top:423px;width:86px;height:16px;">02Vvx</div>
<div class="c cy" style="left:358px;top:423px;width:86px;height:16px;">2013-02-20</div>
<div class="c cy" style="left:444px;top:423px;width:86px;height:16px;letter-spacing:-.6px;">16:18:11</div>
<div class="c cy" style="left:530px;top:423px;width:86px;height:16px;letter-spacing:-.6px;">02</div>
<div class="c cy" style="left:616px;top:423px;width:86px;height:16px;letter-spacing:0;">Load time</div>
<div class="c cy gr" style="left:702px;top:423px;width:86px;height:16px;letter-spacing:-.6px;">1850</div>
<div class="c cy" style="left:788px;top:423px;width:86px;height:16px;">00-02-023</div>
<div class="c cy" style="left:874px;top:423px;width:86px;height:16px;letter-spacing:-.6px;">02</div>
<div class="c cy" style="left:960px;top:423px;width:86px;height:16px;letter-spacing:-.6px;">00</div>
<div class="a" style="left:1045px;top:423px;width:1px;height:16px;background:#000"></div>
</div>
<div class="">
<div class="c g1" style="left:187px;top:441px;width:85px;height:16px;letter-spacing:-.6px">16</div>
<div class="c cy" style="left:272px;top:441px;width:86px;height:16px;">03Qqr</div>
<div class="c cy" style="left:358px;top:441px;width:86px;height:16px;">2013-02-20</div>
<div class="c cy" style="left:444px;top:441px;width:86px;height:16px;letter-spacing:-.6px;">16:18:11</div>
<div class="c cy" style="left:530px;top:441px;width:86px;height:16px;letter-spacing:-.6px;">02</div>
<div class="c cy" style="left:616px;top:441px;width:86px;height:16px;letter-spacing:0;">Load time</div>
<div class="c cy gr" style="left:702px;top:441px;width:86px;height:16px;letter-spacing:-.6px;">2967</div>
<div class="c cy" style="left:788px;top:441px;width:86px;height:16px;">00-03-017</div>
<div class="c cy" style="left:874px;top:441px;width:86px;height:16px;letter-spacing:-.6px;">03</div>
<div class="c cy" style="left:960px;top:441px;width:86px;height:16px;letter-spacing:-.6px;">00</div>
<div class="a" style="left:1045px;top:441px;width:1px;height:16px;background:#000"></div>
</div>
<div class="">
<div class="c g1" style="left:187px;top:459px;width:85px;height:16px;letter-spacing:-.6px">17</div>
<div class="c cy" style="left:272px;top:459px;width:86px;height:16px;">04Uuv</div>
<div class="c cy" style="left:358px;top:459px;width:86px;height:16px;">2013-02-20</div>
<div class="c cy" style="left:444px;top:459px;width:86px;height:16px;letter-spacing:-.6px;">16:18:11</div>
<div class="c cy" style="left:530px;top:459px;width:86px;height:16px;letter-spacing:-.6px;">02</div>
<div class="c cy" style="left:616px;top:459px;width:86px;height:16px;letter-spacing:0;">Load time</div>
<div class="c cy gr" style="left:702px;top:459px;width:86px;height:16px;letter-spacing:-.6px;">2204</div>
<div class="c cy" style="left:788px;top:459px;width:86px;height:16px;">00-04-022</div>
<div class="c cy" style="left:874px;top:459px;width:86px;height:16px;letter-spacing:-.6px;">04</div>
<div class="c cy" style="left:960px;top:459px;width:86px;height:16px;letter-spacing:-.6px;">00</div>
<div class="a" style="left:1045px;top:459px;width:1px;height:16px;background:#000"></div>
</div>
<div class="">
<div class="c g1" style="left:187px;top:477px;width:85px;height:16px;letter-spacing:-.6px">18</div>
<div class="c cy" style="left:272px;top:477px;width:86px;height:16px;">05Qqr</div>
<div class="c cy" style="left:358px;top:477px;width:86px;height:16px;">2013-02-20</div>
<div class="c cy" style="left:444px;top:477px;width:86px;height:16px;letter-spacing:-.6px;">16:18:11</div>
<div class="c cy" style="left:530px;top:477px;width:86px;height:16px;letter-spacing:-.6px;">02</div>
<div class="c cy" style="left:616px;top:477px;width:86px;height:16px;letter-spacing:0;">Load time</div>
<div class="c cy gr" style="left:702px;top:477px;width:86px;height:16px;letter-spacing:-.6px;">3518</div>
<div class="c cy" style="left:788px;top:477px;width:86px;height:16px;">00-05-017</div>
<div class="c cy" style="left:874px;top:477px;width:86px;height:16px;letter-spacing:-.6px;">05</div>
<div class="c cy" style="left:960px;top:477px;width:86px;height:16px;letter-spacing:-.6px;">00</div>
<div class="a" style="left:1045px;top:477px;width:1px;height:16px;background:#000"></div>
</div>
<div class="">
<div class="c g1" style="left:187px;top:495px;width:85px;height:16px;letter-spacing:-.6px">19</div>
<div class="c cy" style="left:272px;top:495px;width:86px;height:16px;">06Oop</div>
<div class="c cy" style="left:358px;top:495px;width:86px;height:16px;">2013-02-20</div>
<div class="c cy" style="left:444px;top:495px;width:86px;height:16px;letter-spacing:-.6px;">16:18:11</div>
<div class="c cy" style="left:530px;top:495px;width:86px;height:16px;letter-spacing:-.6px;">02</div>
<div class="c cy" style="left:616px;top:495px;width:86px;height:16px;letter-spacing:0;">Load time</div>
<div class="c cy gr" style="left:702px;top:495px;width:86px;height:16px;letter-spacing:-.6px;">1475</div>
<div class="c cy" style="left:788px;top:495px;width:86px;height:16px;">01-06-015</div>
<div class="c cy" style="left:874px;top:495px;width:86px;height:16px;letter-spacing:-.6px;">06</div>
<div class="c cy" style="left:960px;top:495px;width:86px;height:16px;letter-spacing:-.6px;">01</div>
<div class="a" style="left:1045px;top:495px;width:1px;height:16px;background:#000"></div>
</div>
<div class="">
<div class="c g1" style="left:187px;top:513px;width:85px;height:16px;letter-spacing:-.6px">20</div>
<div class="c cy" style="left:272px;top:513px;width:86px;height:16px;">07Xxy</div>
<div class="c cy" style="left:358px;top:513px;width:86px;height:16px;">2013-02-20</div>
<div class="c cy" style="left:444px;top:513px;width:86px;height:16px;letter-spacing:-.6px;">16:18:11</div>
<div class="c cy" style="left:530px;top:513px;width:86px;height:16px;letter-spacing:-.6px;">02</div>
<div class="c cy" style="left:616px;top:513px;width:86px;height:16px;letter-spacing:0;">Load time</div>
<div class="c cy gr" style="left:702px;top:513px;width:86px;height:16px;letter-spacing:-.6px;">2630</div>
<div class="c cy" style="left:788px;top:513px;width:86px;height:16px;">01-07-024</div>
<div class="c cy" style="left:874px;top:513px;width:86px;height:16px;letter-spacing:-.6px;">07</div>
<div class="c cy" style="left:960px;top:513px;width:86px;height:16px;letter-spacing:-.6px;">01</div>
<div class="a" style="left:1045px;top:513px;width:1px;height:16px;background:#000"></div>
</div>
<div class="">
<div class="c g1" style="left:187px;top:531px;width:85px;height:16px;letter-spacing:-.6px">21</div>
<div class="c cy" style="left:272px;top:531px;width:86px;height:16px;">08Zzz</div>
<div class="c cy" style="left:358px;top:531px;width:86px;height:16px;">2013-02-20</div>
<div class="c cy" style="left:444px;top:531px;width:86px;height:16px;letter-spacing:-.6px;">16:18:11</div>
<div class="c cy" style="left:530px;top:531px;width:86px;height:16px;letter-spacing:-.6px;">02</div>
<div class="c cy" style="left:616px;top:531px;width:86px;height:16px;letter-spacing:0;">Load time</div>
<div class="c cy gr" style="left:702px;top:531px;width:86px;height:16px;letter-spacing:-.6px;">3099</div>
<div class="c cy" style="left:788px;top:531px;width:86px;height:16px;">01-08-026</div>
<div class="c cy" style="left:874px;top:531px;width:86px;height:16px;letter-spacing:-.6px;">08</div>
<div class="c cy" style="left:960px;top:531px;width:86px;height:16px;letter-spacing:-.6px;">01</div>
<div class="a" style="left:1045px;top:531px;width:1px;height:16px;background:#000"></div>
</div>
<div class="">
<div class="c g1" style="left:187px;top:549px;width:85px;height:16px;letter-spacing:-.6px">22</div>
<div class="c cy" style="left:272px;top:549px;width:86px;height:16px;">01Kkl</div>
<div class="c cy" style="left:358px;top:549px;width:86px;height:16px;">2013-02-20</div>
<div class="c cy" style="left:444px;top:549px;width:86px;height:16px;letter-spacing:-.6px;">16:18:11</div>
<div class="c cy" style="left:530px;top:549px;width:86px;height:16px;letter-spacing:-.6px;">02</div>
<div class="c cy" style="left:616px;top:549px;width:86px;height:16px;letter-spacing:0;">Load time</div>
<div class="c cy gr" style="left:702px;top:549px;width:86px;height:16px;letter-spacing:-.6px;">1812</div>
<div class="c cy" style="left:788px;top:549px;width:86px;height:16px;">02-01-011</div>
<div class="c cy" style="left:874px;top:549px;width:86px;height:16px;letter-spacing:-.6px;">01</div>
<div class="c cy" style="left:960px;top:549px;width:86px;height:16px;letter-spacing:-.6px;">02</div>
<div class="a" style="left:1045px;top:549px;width:1px;height:16px;background:#000"></div>
</div>
<div class="">
<div class="c g1" style="left:187px;top:567px;width:85px;height:16px;letter-spacing:-.6px">23</div>
<div class="c cy" style="left:272px;top:567px;width:86px;height:16px;">02Kkl</div>
<div class="c cy" style="left:358px;top:567px;width:86px;height:16px;">2013-02-20</div>
<div class="c cy" style="left:444px;top:567px;width:86px;height:16px;letter-spacing:-.6px;">16:18:11</div>
<div class="c cy" style="left:530px;top:567px;width:86px;height:16px;letter-spacing:-.6px;">02</div>
<div class="c cy" style="left:616px;top:567px;width:86px;height:16px;letter-spacing:0;">Load time</div>
<div class="c cy gr" style="left:702px;top:567px;width:86px;height:16px;letter-spacing:-.6px;">2276</div>
<div class="c cy" style="left:788px;top:567px;width:86px;height:16px;">02-02-011</div>
<div class="c cy" style="left:874px;top:567px;width:86px;height:16px;letter-spacing:-.6px;">02</div>
<div class="c cy" style="left:960px;top:567px;width:86px;height:16px;letter-spacing:-.6px;">02</div>
<div class="a" style="left:1045px;top:567px;width:1px;height:16px;background:#000"></div>
</div>
<div class="">
<div class="c g1" style="left:187px;top:585px;width:85px;height:16px;letter-spacing:-.6px">24</div>
<div class="c cy" style="left:272px;top:585px;width:86px;height:16px;">03Mmn</div>
<div class="c cy" style="left:358px;top:585px;width:86px;height:16px;">2013-02-20</div>
<div class="c cy" style="left:444px;top:585px;width:86px;height:16px;letter-spacing:-.6px;">16:18:11</div>
<div class="c cy" style="left:530px;top:585px;width:86px;height:16px;letter-spacing:-.6px;">02</div>
<div class="c cy" style="left:616px;top:585px;width:86px;height:16px;letter-spacing:0;">Load time</div>
<div class="c cy gr" style="left:702px;top:585px;width:86px;height:16px;letter-spacing:-.6px;">2940</div>
<div class="c cy" style="left:788px;top:585px;width:86px;height:16px;">03-03-013</div>
<div class="c cy" style="left:874px;top:585px;width:86px;height:16px;letter-spacing:-.6px;">03</div>
<div class="c cy" style="left:960px;top:585px;width:86px;height:16px;letter-spacing:-.6px;">03</div>
<div class="a" style="left:1045px;top:585px;width:1px;height:16px;background:#000"></div>
</div>
<div class="">
<div class="c g1" style="left:187px;top:603px;width:85px;height:16px;letter-spacing:-.6px">25</div>
<div class="c cy" style="left:272px;top:603px;width:86px;height:16px;">04Mmn</div>
<div class="c cy" style="left:358px;top:603px;width:86px;height:16px;">2013-02-20</div>
<div class="c cy" style="left:444px;top:603px;width:86px;height:16px;letter-spacing:-.6px;">16:18:11</div>
<div class="c cy" style="left:530px;top:603px;width:86px;height:16px;letter-spacing:-.6px;">02</div>
<div class="c cy" style="left:616px;top:603px;width:86px;height:16px;letter-spacing:0;">Load time</div>
<div class="c cy gr" style="left:702px;top:603px;width:86px;height:16px;letter-spacing:-.6px;">3361</div>
<div class="c cy" style="left:788px;top:603px;width:86px;height:16px;">03-04-013</div>
<div class="c cy" style="left:874px;top:603px;width:86px;height:16px;letter-spacing:-.6px;">04</div>
<div class="c cy" style="left:960px;top:603px;width:86px;height:16px;letter-spacing:-.6px;">03</div>
<div class="a" style="left:1045px;top:603px;width:1px;height:16px;background:#000"></div>
</div>
<div class="">
<div class="c g1" style="left:187px;top:621px;width:85px;height:16px;letter-spacing:-.6px">26</div>
<div class="c cy" style="left:272px;top:621px;width:86px;height:16px;">05Oop</div>
<div class="c cy" style="left:358px;top:621px;width:86px;height:16px;">2013-02-20</div>
<div class="c cy" style="left:444px;top:621px;width:86px;height:16px;letter-spacing:-.6px;">16:18:11</div>
<div class="c cy" style="left:530px;top:621px;width:86px;height:16px;letter-spacing:-.6px;">02</div>
<div class="c cy" style="left:616px;top:621px;width:86px;height:16px;letter-spacing:0;">Load time</div>
<div class="c cy gr" style="left:702px;top:621px;width:86px;height:16px;letter-spacing:-.6px;">1588</div>
<div class="c cy" style="left:788px;top:621px;width:86px;height:16px;">03-05-015</div>
<div class="c cy" style="left:874px;top:621px;width:86px;height:16px;letter-spacing:-.6px;">05</div>
<div class="c cy" style="left:960px;top:621px;width:86px;height:16px;letter-spacing:-.6px;">03</div>
<div class="a" style="left:1045px;top:621px;width:1px;height:16px;background:#000"></div>
</div>
<div class="">
<div class="c g1" style="left:187px;top:639px;width:85px;height:16px;letter-spacing:-.6px">27</div>
<div class="c cy" style="left:272px;top:639px;width:86px;height:16px;">01Ttu</div>
<div class="c cy" style="left:358px;top:639px;width:86px;height:16px;">2013-02-21</div>
<div class="c cy" style="left:444px;top:639px;width:86px;height:16px;letter-spacing:-.6px;">16:18:11</div>
<div class="c cy" style="left:530px;top:639px;width:86px;height:16px;letter-spacing:-.6px;">02</div>
<div class="c cy" style="left:616px;top:639px;width:86px;height:16px;letter-spacing:0;">Load time</div>
<div class="c cy gr" style="left:702px;top:639px;width:86px;height:16px;letter-spacing:-.6px;">2093</div>
<div class="c cy" style="left:788px;top:639px;width:86px;height:16px;">00-01-021</div>
<div class="c cy" style="left:874px;top:639px;width:86px;height:16px;letter-spacing:-.6px;">01</div>
<div class="c cy" style="left:960px;top:639px;width:86px;height:16px;letter-spacing:-.6px;">00</div>
<div class="a" style="left:1045px;top:639px;width:1px;height:16px;background:#000"></div>
</div>
<div class="">
<div class="c g1" style="left:187px;top:657px;width:85px;height:16px;letter-spacing:-.6px">28</div>
<div class="c cy" style="left:272px;top:657px;width:86px;height:16px;">02Rrs</div>
<div class="c cy" style="left:358px;top:657px;width:86px;height:16px;">2013-02-21</div>
<div class="c cy" style="left:444px;top:657px;width:86px;height:16px;letter-spacing:-.6px;">16:18:11</div>
<div class="c cy" style="left:530px;top:657px;width:86px;height:16px;letter-spacing:-.6px;">02</div>
<div class="c cy" style="left:616px;top:657px;width:86px;height:16px;letter-spacing:0;">Load time</div>
<div class="c cy gr" style="left:702px;top:657px;width:86px;height:16px;letter-spacing:-.6px;">2847</div>
<div class="c cy" style="left:788px;top:657px;width:86px;height:16px;">00-02-018</div>
<div class="c cy" style="left:874px;top:657px;width:86px;height:16px;letter-spacing:-.6px;">02</div>
<div class="c cy" style="left:960px;top:657px;width:86px;height:16px;letter-spacing:-.6px;">00</div>
<div class="a" style="left:1045px;top:657px;width:1px;height:16px;background:#000"></div>
</div>
<div class="">
<div class="c g1" style="left:187px;top:675px;width:85px;height:16px;letter-spacing:-.6px">29</div>
<div class="c cy" style="left:272px;top:675px;width:86px;height:16px;">03Kkl</div>
<div class="c cy" style="left:358px;top:675px;width:86px;height:16px;">2013-02-21</div>
<div class="c cy" style="left:444px;top:675px;width:86px;height:16px;letter-spacing:-.6px;">16:18:11</div>
<div class="c cy" style="left:530px;top:675px;width:86px;height:16px;letter-spacing:-.6px;">02</div>
<div class="c cy" style="left:616px;top:675px;width:86px;height:16px;letter-spacing:0;">Load time</div>
<div class="c cy gr" style="left:702px;top:675px;width:86px;height:16px;letter-spacing:-.6px;">1726</div>
<div class="c cy" style="left:788px;top:675px;width:86px;height:16px;">00-03-011</div>
<div class="c cy" style="left:874px;top:675px;width:86px;height:16px;letter-spacing:-.6px;">03</div>
<div class="c cy" style="left:960px;top:675px;width:86px;height:16px;letter-spacing:-.6px;">00</div>
<div class="a" style="left:1045px;top:675px;width:1px;height:16px;background:#000"></div>
</div>
<div class="">
<div class="c g1" style="left:187px;top:693px;width:85px;height:16px;letter-spacing:-.6px">30</div>
<div class="c cy" style="left:272px;top:693px;width:86px;height:16px;">04Vvx</div>
<div class="c cy" style="left:358px;top:693px;width:86px;height:16px;">2013-02-21</div>
<div class="c cy" style="left:444px;top:693px;width:86px;height:16px;letter-spacing:-.6px;">16:18:11</div>
<div class="c cy" style="left:530px;top:693px;width:86px;height:16px;letter-spacing:-.6px;">02</div>
<div class="c cy" style="left:616px;top:693px;width:86px;height:16px;letter-spacing:0;">Load time</div>
<div class="c cy gr" style="left:702px;top:693px;width:86px;height:16px;letter-spacing:-.6px;">3254</div>
<div class="c cy" style="left:788px;top:693px;width:86px;height:16px;">00-04-023</div>
<div class="c cy" style="left:874px;top:693px;width:86px;height:16px;letter-spacing:-.6px;">04</div>
<div class="c cy" style="left:960px;top:693px;width:86px;height:16px;letter-spacing:-.6px;">00</div>
<div class="a" style="left:1045px;top:693px;width:1px;height:16px;background:#000"></div>
</div>
<div class="">
<div class="c g1" style="left:187px;top:711px;width:85px;height:16px;letter-spacing:-.6px">31</div>
<div class="c cy" style="left:272px;top:711px;width:86px;height:16px;">05Llm</div>
<div class="c cy" style="left:358px;top:711px;width:86px;height:16px;">2013-02-21</div>
<div class="c cy" style="left:444px;top:711px;width:86px;height:16px;letter-spacing:-.6px;">16:18:11</div>
<div class="c cy" style="left:530px;top:711px;width:86px;height:16px;letter-spacing:-.6px;">02</div>
<div class="c cy" style="left:616px;top:711px;width:86px;height:16px;letter-spacing:0;">Load time</div>
<div class="c cy gr" style="left:702px;top:711px;width:86px;height:16px;letter-spacing:-.6px;">1403</div>
<div class="c cy" style="left:788px;top:711px;width:86px;height:16px;">00-05-012</div>
<div class="c cy" style="left:874px;top:711px;width:86px;height:16px;letter-spacing:-.6px;">05</div>
<div class="c cy" style="left:960px;top:711px;width:86px;height:16px;letter-spacing:-.6px;">00</div>
<div class="a" style="left:1045px;top:711px;width:1px;height:16px;background:#000"></div>
</div>
<div class="">
<div class="c g1" style="left:187px;top:729px;width:85px;height:16px;letter-spacing:-.6px">32</div>
<div class="c cy" style="left:272px;top:729px;width:86px;height:16px;">06Vvx</div>
<div class="c cy" style="left:358px;top:729px;width:86px;height:16px;">2013-02-21</div>
<div class="c cy" style="left:444px;top:729px;width:86px;height:16px;letter-spacing:-.6px;">16:18:11</div>
<div class="c cy" style="left:530px;top:729px;width:86px;height:16px;letter-spacing:-.6px;">02</div>
<div class="c cy" style="left:616px;top:729px;width:86px;height:16px;letter-spacing:0;">Load time</div>
<div class="c cy gr" style="left:702px;top:729px;width:86px;height:16px;letter-spacing:-.6px;">1320</div>
<div class="c cy" style="left:788px;top:729px;width:86px;height:16px;">01-06-023</div>
<div class="c cy" style="left:874px;top:729px;width:86px;height:16px;letter-spacing:-.6px;">06</div>
<div class="c cy" style="left:960px;top:729px;width:86px;height:16px;letter-spacing:-.6px;">01</div>
<div class="a" style="left:1045px;top:729px;width:1px;height:16px;background:#000"></div>
</div>
<div class="">
<div class="c g1" style="left:187px;top:747px;width:85px;height:16px;letter-spacing:-.6px">33</div>
<div class="c cy" style="left:272px;top:747px;width:86px;height:16px;">07Vvx</div>
<div class="c cy" style="left:358px;top:747px;width:86px;height:16px;">2013-02-21</div>
<div class="c cy" style="left:444px;top:747px;width:86px;height:16px;letter-spacing:-.6px;">16:18:11</div>
<div class="c cy" style="left:530px;top:747px;width:86px;height:16px;letter-spacing:-.6px;">02</div>
<div class="c cy" style="left:616px;top:747px;width:86px;height:16px;letter-spacing:0;">Load time</div>
<div class="c cy gr" style="left:702px;top:747px;width:86px;height:16px;letter-spacing:-.6px;">1320</div>
<div class="c cy" style="left:788px;top:747px;width:86px;height:16px;">01-07-023</div>
<div class="c cy" style="left:874px;top:747px;width:86px;height:16px;letter-spacing:-.6px;">07</div>
<div class="c cy" style="left:960px;top:747px;width:86px;height:16px;letter-spacing:-.6px;">01</div>
<div class="a" style="left:1045px;top:747px;width:1px;height:16px;background:#000"></div>
</div>
<div class="">
<div class="c g1" style="left:187px;top:765px;width:85px;height:16px;letter-spacing:-.6px">34</div>
<div class="c cy" style="left:272px;top:765px;width:86px;height:16px;">08Ppq</div>
<div class="c cy" style="left:358px;top:765px;width:86px;height:16px;">2013-02-21</div>
<div class="c cy" style="left:444px;top:765px;width:86px;height:16px;letter-spacing:-.6px;">16:18:11</div>
<div class="c cy" style="left:530px;top:765px;width:86px;height:16px;letter-spacing:-.6px;">02</div>
<div class="c cy" style="left:616px;top:765px;width:86px;height:16px;letter-spacing:0;">Load time</div>
<div class="c cy gr" style="left:702px;top:765px;width:86px;height:16px;letter-spacing:-.6px;">3045</div>
<div class="c cy" style="left:788px;top:765px;width:86px;height:16px;">01-08-016</div>
<div class="c cy" style="left:874px;top:765px;width:86px;height:16px;letter-spacing:-.6px;">08</div>
<div class="c cy" style="left:960px;top:765px;width:86px;height:16px;letter-spacing:-.6px;">01</div>
<div class="a" style="left:1045px;top:765px;width:1px;height:16px;background:#000"></div>
</div>
<div class="">
<div class="c g1" style="left:187px;top:783px;width:85px;height:16px;letter-spacing:-.6px">35</div>
<div class="c cy" style="left:272px;top:783px;width:86px;height:16px;">01Rrs</div>
<div class="c cy" style="left:358px;top:783px;width:86px;height:16px;">2013-02-21</div>
<div class="c cy" style="left:444px;top:783px;width:86px;height:16px;letter-spacing:-.6px;">16:18:11</div>
<div class="c cy" style="left:530px;top:783px;width:86px;height:16px;letter-spacing:-.6px;">02</div>
<div class="c cy" style="left:616px;top:783px;width:86px;height:16px;letter-spacing:0;">Load time</div>
<div class="c cy gr" style="left:702px;top:783px;width:86px;height:16px;letter-spacing:-.6px;">3931</div>
<div class="c cy" style="left:788px;top:783px;width:86px;height:16px;">02-01-018</div>
<div class="c cy" style="left:874px;top:783px;width:86px;height:16px;letter-spacing:-.6px;">01</div>
<div class="c cy" style="left:960px;top:783px;width:86px;height:16px;letter-spacing:-.6px;">02</div>
<div class="a" style="left:1045px;top:783px;width:1px;height:16px;background:#000"></div>
</div>
<div class="">
<div class="c g1" style="left:187px;top:801px;width:85px;height:16px;letter-spacing:-.6px">36</div>
<div class="c cy" style="left:272px;top:801px;width:86px;height:16px;">02Ppq</div>
<div class="c cy" style="left:358px;top:801px;width:86px;height:16px;">2013-02-21</div>
<div class="c cy" style="left:444px;top:801px;width:86px;height:16px;letter-spacing:-.6px;">16:18:11</div>
<div class="c cy" style="left:530px;top:801px;width:86px;height:16px;letter-spacing:-.6px;">02</div>
<div class="c cy" style="left:616px;top:801px;width:86px;height:16px;letter-spacing:0;">Load time</div>
<div class="c cy gr" style="left:702px;top:801px;width:86px;height:16px;letter-spacing:-.6px;">2363</div>
<div class="c cy" style="left:788px;top:801px;width:86px;height:16px;">02-02-016</div>
<div class="c cy" style="left:874px;top:801px;width:86px;height:16px;letter-spacing:-.6px;">02</div>
<div class="c cy" style="left:960px;top:801px;width:86px;height:16px;letter-spacing:-.6px;">02</div>
<div class="a" style="left:1045px;top:801px;width:1px;height:16px;background:#000"></div>
</div>
<div class="">
<div class="c g1" style="left:187px;top:819px;width:85px;height:16px;letter-spacing:-.6px">37</div>
<div class="c cy" style="left:272px;top:819px;width:86px;height:16px;">03Yyz</div>
<div class="c cy" style="left:358px;top:819px;width:86px;height:16px;">2013-02-21</div>
<div class="c cy" style="left:444px;top:819px;width:86px;height:16px;letter-spacing:-.6px;">16:18:11</div>
<div class="c cy" style="left:530px;top:819px;width:86px;height:16px;letter-spacing:-.6px;">02</div>
<div class="c cy" style="left:616px;top:819px;width:86px;height:16px;letter-spacing:0;">Load time</div>
<div class="c cy gr" style="left:702px;top:819px;width:86px;height:16px;letter-spacing:-.6px;">3113</div>
<div class="c cy" style="left:788px;top:819px;width:86px;height:16px;">03-03-025</div>
<div class="c cy" style="left:874px;top:819px;width:86px;height:16px;letter-spacing:-.6px;">03</div>
<div class="c cy" style="left:960px;top:819px;width:86px;height:16px;letter-spacing:-.6px;">03</div>
<div class="a" style="left:1045px;top:819px;width:1px;height:16px;background:#000"></div>
</div>
<div class="">
<div class="c g1" style="left:187px;top:837px;width:85px;height:16px;letter-spacing:-.6px">38</div>
<div class="c cy" style="left:272px;top:837px;width:86px;height:16px;">04Qqr</div>
<div class="c cy" style="left:358px;top:837px;width:86px;height:16px;">2013-02-21</div>
<div class="c cy" style="left:444px;top:837px;width:86px;height:16px;letter-spacing:-.6px;">16:18:11</div>
<div class="c cy" style="left:530px;top:837px;width:86px;height:16px;letter-spacing:-.6px;">02</div>
<div class="c cy" style="left:616px;top:837px;width:86px;height:16px;letter-spacing:0;">Load time</div>
<div class="c cy gr" style="left:702px;top:837px;width:86px;height:16px;letter-spacing:-.6px;">3018</div>
<div class="c cy" style="left:788px;top:837px;width:86px;height:16px;">03-04-017</div>
<div class="c cy" style="left:874px;top:837px;width:86px;height:16px;letter-spacing:-.6px;">04</div>
<div class="c cy" style="left:960px;top:837px;width:86px;height:16px;letter-spacing:-.6px;">03</div>
<div class="a" style="left:1045px;top:837px;width:1px;height:16px;background:#000"></div>
</div>
<div class="">
<div class="c g1" style="left:187px;top:855px;width:85px;height:16px;letter-spacing:-.6px">39</div>
<div class="c cy" style="left:272px;top:855px;width:86px;height:16px;">05Ppq</div>
<div class="c cy" style="left:358px;top:855px;width:86px;height:16px;">2013-02-21</div>
<div class="c cy" style="left:444px;top:855px;width:86px;height:16px;letter-spacing:-.6px;">16:18:11</div>
<div class="c cy" style="left:530px;top:855px;width:86px;height:16px;letter-spacing:-.6px;">02</div>
<div class="c cy" style="left:616px;top:855px;width:86px;height:16px;letter-spacing:0;">Load time</div>
<div class="c cy gr" style="left:702px;top:855px;width:86px;height:16px;letter-spacing:-.6px;">2455</div>
<div class="c cy" style="left:788px;top:855px;width:86px;height:16px;">03-05-016</div>
<div class="c cy" style="left:874px;top:855px;width:86px;height:16px;letter-spacing:-.6px;">05</div>
<div class="c cy" style="left:960px;top:855px;width:86px;height:16px;letter-spacing:-.6px;">03</div>
<div class="a" style="left:1045px;top:855px;width:1px;height:16px;background:#000"></div>
</div>
<div class="">
<div class="c g1" style="left:187px;top:873px;width:85px;height:16px;letter-spacing:-.6px">40</div>
<div class="c cy" style="left:272px;top:873px;width:86px;height:16px;">01Ppq</div>
<div class="c cy" style="left:358px;top:873px;width:86px;height:16px;">2013-02-22</div>
<div class="c cy" style="left:444px;top:873px;width:86px;height:16px;letter-spacing:-.6px;">16:18:11</div>
<div class="c cy" style="left:530px;top:873px;width:86px;height:16px;letter-spacing:-.6px;">02</div>
<div class="c cy" style="left:616px;top:873px;width:86px;height:16px;letter-spacing:0;">Load time</div>
<div class="c cy gr" style="left:702px;top:873px;width:86px;height:16px;letter-spacing:-.6px;">3739</div>
<div class="c cy" style="left:788px;top:873px;width:86px;height:16px;">00-01-016</div>
<div class="c cy" style="left:874px;top:873px;width:86px;height:16px;letter-spacing:-.6px;">01</div>
<div class="c cy" style="left:960px;top:873px;width:86px;height:16px;letter-spacing:-.6px;">00</div>
<div class="a" style="left:1045px;top:873px;width:1px;height:16px;background:#000"></div>
</div>
<div class="">
<div class="c g1" style="left:187px;top:891px;width:85px;height:16px;letter-spacing:-.6px">41</div>
<div class="c cy" style="left:272px;top:891px;width:86px;height:16px;">02Llm</div>
<div class="c cy" style="left:358px;top:891px;width:86px;height:16px;">2013-02-22</div>
<div class="c cy" style="left:444px;top:891px;width:86px;height:16px;letter-spacing:-.6px;">16:18:11</div>
<div class="c cy" style="left:530px;top:891px;width:86px;height:16px;letter-spacing:-.6px;">02</div>
<div class="c cy" style="left:616px;top:891px;width:86px;height:16px;letter-spacing:0;">Load time</div>
<div class="c cy gr" style="left:702px;top:891px;width:86px;height:16px;letter-spacing:-.6px;">1696</div>
<div class="c cy" style="left:788px;top:891px;width:86px;height:16px;">00-02-012</div>
<div class="c cy" style="left:874px;top:891px;width:86px;height:16px;letter-spacing:-.6px;">02</div>
<div class="c cy" style="left:960px;top:891px;width:86px;height:16px;letter-spacing:-.6px;">00</div>
<div class="a" style="left:1045px;top:891px;width:1px;height:16px;background:#000"></div>
</div>
<div class="">
<div class="c g1" style="left:187px;top:909px;width:85px;height:9px;letter-spacing:-.6px">42</div>
<div class="c cy" style="left:272px;top:909px;width:86px;height:9px;">03Ppq</div>
<div class="c cy" style="left:358px;top:909px;width:86px;height:9px;">2013-02-22</div>
<div class="c cy" style="left:444px;top:909px;width:86px;height:9px;letter-spacing:-.6px;">16:18:11</div>
<div class="c cy" style="left:530px;top:909px;width:86px;height:9px;letter-spacing:-.6px;">02</div>
<div class="c cy" style="left:616px;top:909px;width:86px;height:9px;letter-spacing:0;">Load time</div>
<div class="c cy gr" style="left:702px;top:909px;width:86px;height:9px;letter-spacing:-.6px;">2660</div>
<div class="c cy" style="left:788px;top:909px;width:86px;height:9px;">00-03-016</div>
<div class="c cy" style="left:874px;top:909px;width:86px;height:9px;letter-spacing:-.6px;">03</div>
<div class="c cy" style="left:960px;top:909px;width:86px;height:9px;letter-spacing:-.6px;">00</div>
<div class="a" style="left:1045px;top:909px;width:1px;height:9px;background:#000"></div>
</div>
<div class="a" style="left:1247px;top:169px;width:16px;height:749px;background:#f0f0f0"></div>
<div class="a" style="left:1247px;top:188px;width:15px;height:291px;border:1px solid #979797;border-radius:2px;background:linear-gradient(90deg,#f6f6f6 0,#e9e9e9 45%,#d6d6d6 55%,#c9c9c9 100%)"></div>
<svg class="a" style="left:1250px;top:329px" width="9" height="9"><path d="M0 .5 H8 M0 3.5 H8 M0 6.5 H8" stroke="#5a5a5a" stroke-width="1"/></svg>
<svg class="a" style="left:1252px;top:177px" width="8" height="5"><path d="M4 .4 L7.6 4.4 L.4 4.4Z" fill="#5c5c5c"/></svg>
<svg class="a" style="left:1252px;top:907px" width="8" height="5"><path d="M.4 .2 L7.6 .2 L4 4.2Z" fill="#5c5c5c"/></svg>
<div class="btn dis" style="left:188px;top:921px;width:73px;height:26px;line-height:23px;font-size:10px;letter-spacing:2px">&lt;&lt;</div>
<div class="btn dis" style="left:273px;top:921px;width:74px;height:26px;line-height:23px;font-size:10px">&lt;</div>
<div class="btn" style="left:506px;top:921px;width:73px;height:26px;line-height:23px;font-size:10px">&gt;</div>
<div class="btn" style="left:591px;top:921px;width:74px;height:26px;line-height:23px;font-size:10px;letter-spacing:2px">&gt;&gt;</div>
<div class="t" style="left:359px;top:927px;font-weight:bold">1</div>
<div class="t" style="left:377px;top:927px">to</div>
<div class="t" style="left:399px;top:927px;font-weight:bold;letter-spacing:.25px">100</div>
<div class="t" style="left:432px;top:927px">of</div>
<div class="t" style="left:453px;top:927px;font-weight:bold;letter-spacing:.35px">121160</div>
<div class="a" style="left:0;top:962px;width:1279px;height:22px;background:#f0eded"></div>
<div class="a" style="left:0;top:962px;width:1279px;height:1px;background:#a9a9a9"></div>
<div class="a" style="left:0;top:963px;width:1279px;height:1px;background:#f8f6f6"></div>
<div class="t" style="left:10px;top:966px;font-weight:bold;letter-spacing:-.1px">SQLite 3.7.14.1</div>
<div class="t" style="left:114px;top:966px;letter-spacing:-.35px">Gecko 19.0</div>
<div class="t" style="left:190px;top:966px;color:#808080;letter-spacing:-.3px">0.7.7</div>
<div class="t" style="left:235px;top:966px;font-weight:bold;letter-spacing:-.45px">Exclusive</div>
<div class="t" style="left:306px;top:966px;letter-spacing:-.07px">Number of files in selected directory: 14</div>
<div class="t" style="left:1226px;top:966px;letter-spacing:-.2px">ET: 2 ms</div>
<div class="stsep" style="left:103px"></div>
<div class="stsep" style="left:180px"></div>
<div class="stsep" style="left:224px"></div>
<div class="stsep" style="left:295px"></div>
<div class="stsep" style="left:1215px"></div>
<div class="a" style="left:0;top:983px;width:1279px;height:1px;background:#b9c0c9"></div>
<div class="a" style="left:0;top:984px;width:1279px;height:1px;background:#3d4f66"></div>
<div class="a" style="left:0;top:985px;width:1279px;height:1px;background:linear-gradient(90deg,#b4c8e0 0,#b4c8e0 362px,#fff 362px,#fff 504px,#b4c8e0 504px,#b4c8e0 628px,#fff 628px,#fff 1265px,#ccc 1265px)"></div>
<div class="a" style="left:459px;top:275px;width:362px;height:433px;border:1px solid #111;border-radius:6px 6px 0 0;background:linear-gradient(#98b0cf 0,#a6bddb 16px,#b4cae6 30px,#b9d0ea 48px,#b9d0ea 100%);box-shadow:inset 1px 1px 0 #f4f9ff,inset -1px -1px 0 #54d6f6"></div>
<div class="a" style="left:467px;top:305px;width:346px;height:395px;background:#f0f0f0"></div>
<div class="t" style="left:471px;top:287px;letter-spacing:-.28px">Edit Record</div>
<div class="a" style="left:780px;top:285px;width:31px;height:17px;border:1px solid #4b1a22;border-radius:3.5px;background:linear-gradient(#e9b0a2 0,#d98472 45%,#b9401f 50%,#d26a50 100%);box-shadow:inset 0 0 0 1px rgba(255,255,255,.4)"></div>
<svg class="a" style="left:789px;top:288px" width="13" height="11" viewBox="0 0 13 11"><path d="M1 1.2 L4.6 1.2 L6.5 3.4 L8.4 1.2 L12 1.2 L8.6 5.4 L12 9.6 L8.4 9.6 L6.5 7.4 L4.6 9.6 L1 9.6 L4.4 5.4Z" fill="#f4f4f4" stroke="#5b4750" stroke-width="1.1" stroke-linejoin="round"/></svg>
<div class="t" style="left:527px;top:324px">Table <u>N</u>ame:</div>
<div class="a" style="left:603px;top:320px;width:150px;height:27px;border:1px solid #adb2b5;border-radius:3px;background:#f4f4f4;box-shadow:inset 0 0 0 1px #fcfcfc"></div>
<div class="t" style="left:609px;top:327px;color:#6d6d6d">load_time</div>
<svg class="a" style="left:738px;top:332px" width="8" height="5"><path d="M0 0 L8 0 L4 4.5Z" fill="#8a8a8a"/></svg>
<div class="a" style="left:478px;top:366px;width:304px;height:287px;border:1px solid #d5dfe5;border-bottom:none;border-radius:3px 3px 0 0;box-shadow:inset 1px 1px 0 #fff"></div>
<div class="a" style="left:484px;top:358px;width:96px;height:16px;background:#f0f0f0"></div>
<div class="t" style="left:486px;top:359px;letter-spacing:-.3px">Enter Field Values</div>
<div class="a" style="left:470px;top:375px;width:330px;height:278px;overflow:hidden">
<div class="fl" style="left:20px;top:12px;letter-spacing:-.3px"><u>1</u>. page ( CHAR )</div>
<div class="tb" style="left:179px;top:6px;width:92px;background:#ccffff"><span style="background:#3399ff;color:#fff;display:inline-block;height:17px;line-height:17px;padding:0 1px 0 0;margin-top:2px;vertical-align:top">04Oop</span></div>
<svg class="a" style="left:276px;top:9px" width="16" height="17" viewBox="0 0 16 17"><rect width="16" height="17" fill="#fff" opacity=".55"/><path d="M1.5 5.5 L7.5 5.5 L7.5 1.5 L14.5 8.5 L7.5 15.5 L7.5 11.5 L1.5 11.5Z" fill="#18b8b0" stroke="#000" stroke-width="1.2" stroke-linejoin="round"/><path d="M2.5 6.5 L8.5 6.5 L8.5 4" stroke="#8ff0e8" stroke-width="1" fill="none"/></svg>
<svg class="a" style="left:294px;top:9px" width="9" height="17" viewBox="0 0 9 17"><path d="M1.5 5 V12.5 A3 3 0 0 0 7.5 12.5 V3.5 A2 2 0 0 0 3.5 3.5 V12 A1 1 0 0 0 5.5 12 V5.5" fill="none" stroke="#4a5a78" stroke-width="1.1"/></svg>
<div class="fl" style="left:20px;top:47px;letter-spacing:-.3px"><u>2</u>. date ( DATE )</div>
<div class="tb" style="left:179px;top:41px;width:92px;background:#ccffff;">2013-02-19</div>
<svg class="a" style="left:276px;top:44px" width="16" height="17" viewBox="0 0 16 17"><rect width="16" height="17" fill="#fff" opacity=".55"/><path d="M1.5 5.5 L7.5 5.5 L7.5 1.5 L14.5 8.5 L7.5 15.5 L7.5 11.5 L1.5 11.5Z" fill="#18b8b0" stroke="#000" stroke-width="1.2" stroke-linejoin="round"/><path d="M2.5 6.5 L8.5 6.5 L8.5 4" stroke="#8ff0e8" stroke-width="1" fill="none"/></svg>
<svg class="a" style="left:294px;top:44px" width="9" height="17" viewBox="0 0 9 17"><path d="M1.5 5 V12.5 A3 3 0 0 0 7.5 12.5 V3.5 A2 2 0 0 0 3.5 3.5 V12 A1 1 0 0 0 5.5 12 V5.5" fill="none" stroke="#4a5a78" stroke-width="1.1"/></svg>
<div class="fl" style="left:20px;top:82px;letter-spacing:-.3px"><u>3</u>. time ( TIME )</div>
<div class="tb" style="left:179px;top:76px;width:92px;background:#ccffff;">16:18:11</div>
<svg class="a" style="left:276px;top:79px" width="16" height="17" viewBox="0 0 16 17"><rect width="16" height="17" fill="#fff" opacity=".55"/><path d="M1.5 5.5 L7.5 5.5 L7.5 1.5 L14.5 8.5 L7.5 15.5 L7.5 11.5 L1.5 11.5Z" fill="#18b8b0" stroke="#000" stroke-width="1.2" stroke-linejoin="round"/><path d="M2.5 6.5 L8.5 6.5 L8.5 4" stroke="#8ff0e8" stroke-width="1" fill="none"/></svg>
<svg class="a" style="left:294px;top:79px" width="9" height="17" viewBox="0 0 9 17"><path d="M1.5 5 V12.5 A3 3 0 0 0 7.5 12.5 V3.5 A2 2 0 0 0 3.5 3.5 V12 A1 1 0 0 0 5.5 12 V5.5" fill="none" stroke="#4a5a78" stroke-width="1.1"/></svg>
<div class="fl" style="left:20px;top:117px;letter-spacing:-.3px"><u>4</u>. month ( CHAR )</div>
<div class="tb" style="left:179px;top:111px;width:92px;background:#ccffff;letter-spacing:-.6px;">02</div>
<svg class="a" style="left:276px;top:114px" width="16" height="17" viewBox="0 0 16 17"><rect width="16" height="17" fill="#fff" opacity=".55"/><path d="M1.5 5.5 L7.5 5.5 L7.5 1.5 L14.5 8.5 L7.5 15.5 L7.5 11.5 L1.5 11.5Z" fill="#18b8b0" stroke="#000" stroke-width="1.2" stroke-linejoin="round"/><path d="M2.5 6.5 L8.5 6.5 L8.5 4" stroke="#8ff0e8" stroke-width="1" fill="none"/></svg>
<svg class="a" style="left:294px;top:114px" width="9" height="17" viewBox="0 0 9 17"><path d="M1.5 5 V12.5 A3 3 0 0 0 7.5 12.5 V3.5 A2 2 0 0 0 3.5 3.5 V12 A1 1 0 0 0 5.5 12 V5.5" fill="none" stroke="#4a5a78" stroke-width="1.1"/></svg>
<div class="fl" style="left:20px;top:152px;letter-spacing:-.3px"><u>5</u>. message ( CHAR )</div>
<div class="tb" style="left:179px;top:146px;width:92px;background:#ccffff;letter-spacing:0;">Load time</div>
<svg class="a" style="left:276px;top:149px" width="16" height="17" viewBox="0 0 16 17"><rect width="16" height="17" fill="#fff" opacity=".55"/><path d="M1.5 5.5 L7.5 5.5 L7.5 1.5 L14.5 8.5 L7.5 15.5 L7.5 11.5 L1.5 11.5Z" fill="#18b8b0" stroke="#000" stroke-width="1.2" stroke-linejoin="round"/><path d="M2.5 6.5 L8.5 6.5 L8.5 4" stroke="#8ff0e8" stroke-width="1" fill="none"/></svg>
<svg class="a" style="left:294px;top:149px" width="9" height="17" viewBox="0 0 9 17"><path d="M1.5 5 V12.5 A3 3 0 0 0 7.5 12.5 V3.5 A2 2 0 0 0 3.5 3.5 V12 A1 1 0 0 0 5.5 12 V5.5" fill="none" stroke="#4a5a78" stroke-width="1.1"/></svg>
<div class="fl" style="left:20px;top:187px;letter-spacing:-.3px"><u>6</u>. load_time ( NUMERIC )</div>
<div class="tb" style="left:179px;top:181px;width:92px;background:#ccffcc;letter-spacing:-.6px;">2559</div>
<svg class="a" style="left:276px;top:184px" width="16" height="17" viewBox="0 0 16 17"><rect width="16" height="17" fill="#fff" opacity=".55"/><path d="M1.5 5.5 L7.5 5.5 L7.5 1.5 L14.5 8.5 L7.5 15.5 L7.5 11.5 L1.5 11.5Z" fill="#18b8b0" stroke="#000" stroke-width="1.2" stroke-linejoin="round"/><path d="M2.5 6.5 L8.5 6.5 L8.5 4" stroke="#8ff0e8" stroke-width="1" fill="none"/></svg>
<svg class="a" style="left:294px;top:184px" width="9" height="17" viewBox="0 0 9 17"><path d="M1.5 5 V12.5 A3 3 0 0 0 7.5 12.5 V3.5 A2 2 0 0 0 3.5 3.5 V12 A1 1 0 0 0 5.5 12 V5.5" fill="none" stroke="#4a5a78" stroke-width="1.1"/></svg>
<div class="fl" style="left:20px;top:222px;letter-spacing:-.3px"><u>7</u>. origin ( CHAR )</div>
<div class="tb" style="left:179px;top:216px;width:92px;background:#ccffff;">03-04-015</div>
<svg class="a" style="left:276px;top:219px" width="16" height="17" viewBox="0 0 16 17"><rect width="16" height="17" fill="#fff" opacity=".55"/><path d="M1.5 5.5 L7.5 5.5 L7.5 1.5 L14.5 8.5 L7.5 15.5 L7.5 11.5 L1.5 11.5Z" fill="#18b8b0" stroke="#000" stroke-width="1.2" stroke-linejoin="round"/><path d="M2.5 6.5 L8.5 6.5 L8.5 4" stroke="#8ff0e8" stroke-width="1" fill="none"/></svg>
<svg class="a" style="left:294px;top:219px" width="9" height="17" viewBox="0 0 9 17"><path d="M1.5 5 V12.5 A3 3 0 0 0 7.5 12.5 V3.5 A2 2 0 0 0 3.5 3.5 V12 A1 1 0 0 0 5.5 12 V5.5" fill="none" stroke="#4a5a78" stroke-width="1.1"/></svg>
<div class="fl" style="left:20px;top:257px;letter-spacing:-.3px"><u>8</u>. course ( CHAR )</div>
<div class="tb" style="left:179px;top:251px;width:92px;background:#ccffff;letter-spacing:-.6px;">04</div>
<svg class="a" style="left:276px;top:254px" width="16" height="17" viewBox="0 0 16 17"><rect width="16" height="17" fill="#fff" opacity=".55"/><path d="M1.5 5.5 L7.5 5.5 L7.5 1.5 L14.5 8.5 L7.5 15.5 L7.5 11.5 L1.5 11.5Z" fill="#18b8b0" stroke="#000" stroke-width="1.2" stroke-linejoin="round"/><path d="M2.5 6.5 L8.5 6.5 L8.5 4" stroke="#8ff0e8" stroke-width="1" fill="none"/></svg>
<svg class="a" style="left:294px;top:254px" width="9" height="17" viewBox="0 0 9 17"><path d="M1.5 5 V12.5 A3 3 0 0 0 7.5 12.5 V3.5 A2 2 0 0 0 3.5 3.5 V12 A1 1 0 0 0 5.5 12 V5.5" fill="none" stroke="#4a5a78" stroke-width="1.1"/></svg>
</div>
<div class="a" style="left:787px;top:355px;width:16px;height:299px;background:#f0f0f0"></div>
<div class="a" style="left:788px;top:372px;width:14px;height:222px;border:1px solid #979797;border-radius:2px;background:linear-gradient(90deg,#f6f6f6 0,#e9e9e9 45%,#d6d6d6 55%,#c9c9c9 100%)"></div>
<svg class="a" style="left:791px;top:479px" width="8" height="9"><path d="M0 .5 H7 M0 3.5 H7 M0 6.5 H7" stroke="#5a5a5a" stroke-width="1"/></svg>
<svg class="a" style="left:791px;top:360px" width="8" height="5"><path d="M4 .4 L7.6 4.4 L.4 4.4Z" fill="#5c5c5c"/></svg>
<svg class="a" style="left:791px;top:643px" width="8" height="5"><path d="M.4 .2 L7.6 .2 L4 4.2Z" fill="#5c5c5c"/></svg>
<div class="btn" style="left:638px;top:661px;width:73px;height:26px;line-height:24px;border-color:#3c7fb1;background:linear-gradient(#eaf6fd 0,#d9f0fc 48%,#bee6fd 52%,#a7d9f5 100%);box-shadow:inset 0 0 0 1px #48d8fa"><u>O</u>K</div>
<div class="btn" style="left:723px;top:661px;width:74px;height:26px;line-height:24px">Cancel</div>
<svg class="a" style="left:677px;top:668px" width="13" height="21" viewBox="0 0 13 21"><path d="M1 1 L1 17 L4.7 13.5 L7.3 19.7 L10 18.5 L7.4 12.5 L12 12.5Z" fill="#fff" stroke="#000" stroke-width="1" stroke-linejoin="miter"/></svg>
</body></html>
